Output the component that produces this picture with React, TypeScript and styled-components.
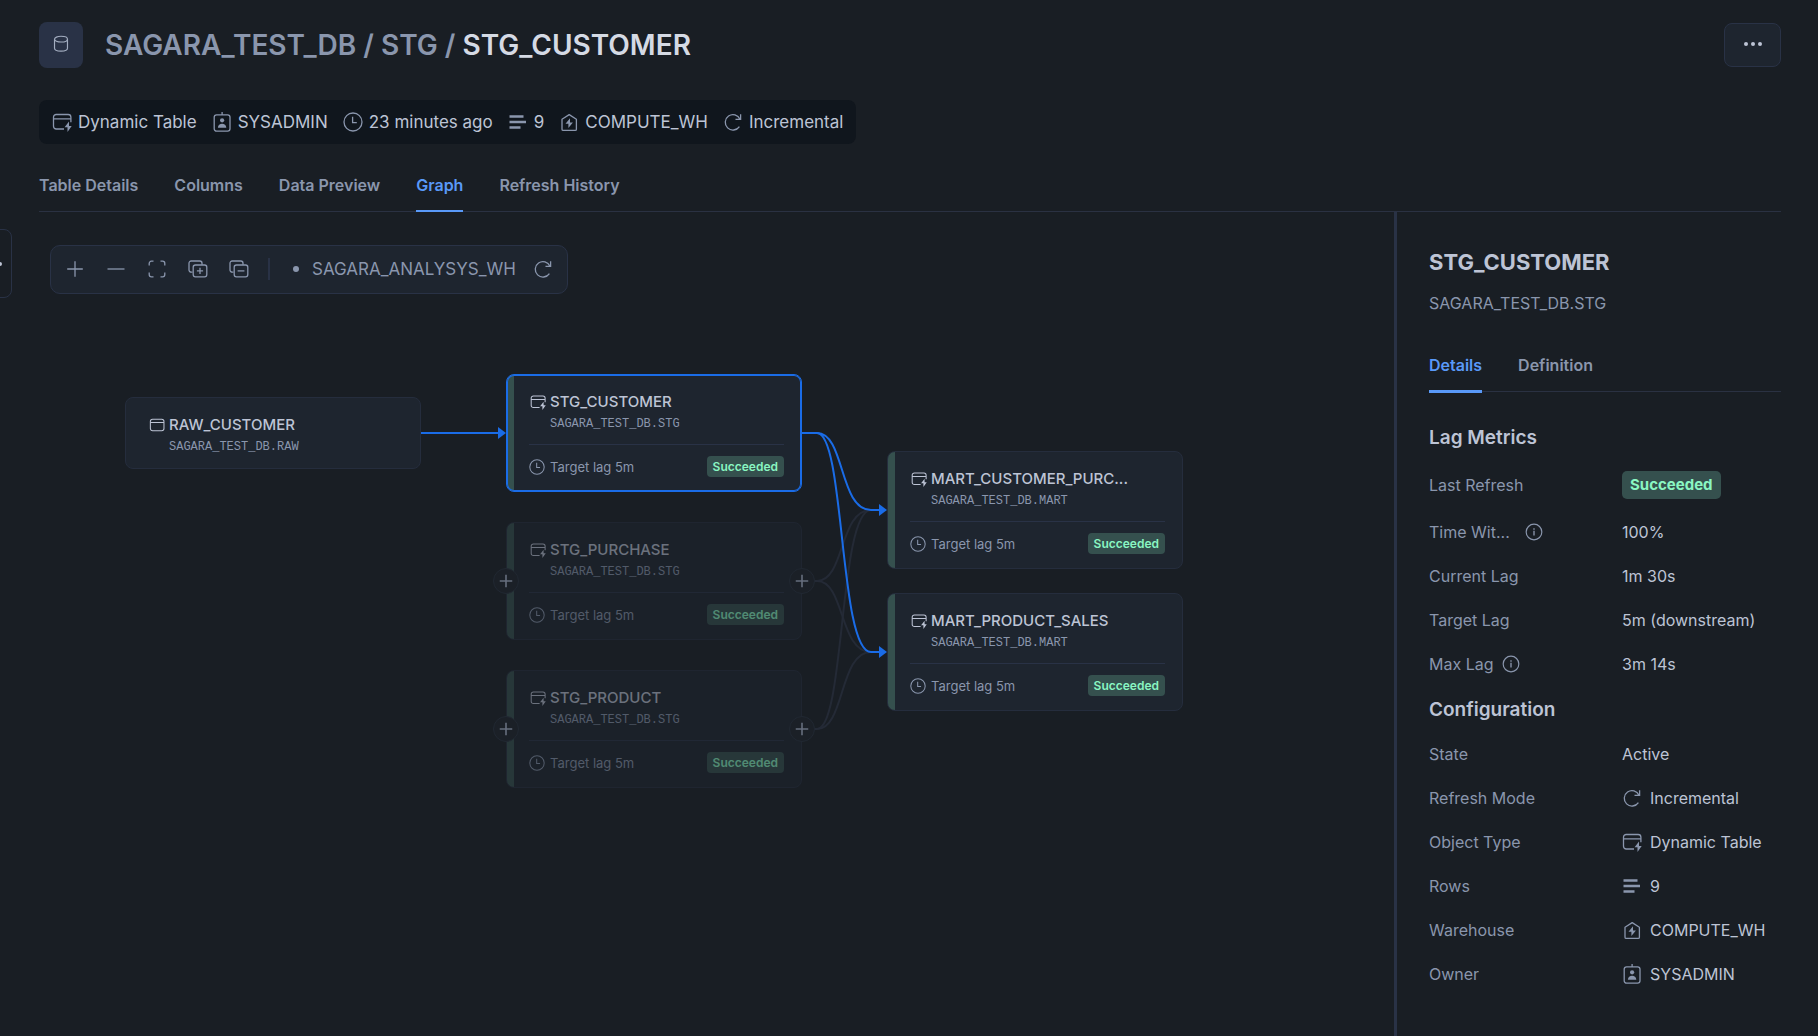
import React from "react";
import styled, { createGlobalStyle, css } from "styled-components";

const color = {
  bg: "#191e24",
  surface: "#1e252f",
  sunken: "#10161d",
  border: "#293246",
  line: "#2a3142",
  text: "#bdc4d5",
  strong: "#d5dae4",
  muted: "#8a96ad",
  accent: "#5999f8",
  edge: "#1a6ce7",
  green: "#35504e",
  greenText: "#8af6c2",
};

const GlobalStyle = createGlobalStyle`
  * { box-sizing: border-box; }
  body {
    margin: 0;
    background: ${color.bg};
    color: ${color.text};
    font-family: Inter, "Liberation Sans", sans-serif;
    font-size: 16px;
    line-height: 22px;
  }
  button { font: inherit; color: inherit; background: none; border: 0; padding: 0; cursor: pointer; }
  h1, h2, h3, p, dl, dd, ul { margin: 0; padding: 0; }
`;

/* ---------- icons ---------- */

const Svg = styled.svg<{ $size?: number }>`
  display: block;
  flex: none;
  width: ${(p) => p.$size ?? 20}px;
  height: ${(p) => p.$size ?? 20}px;
  fill: none;
  stroke: currentColor;
  stroke-width: 1.3;
`;

type IconProps = { size?: number };

const DatabaseIcon = ({ size }: IconProps) => (
  <Svg $size={size} viewBox="0 0 20 20">
    <ellipse cx="10" cy="4.6" rx="7.2" ry="3.2" />
    <path d="M2.800 4.600v10.200c0 1.800 3.200 3.200 7.200 3.200s7.200-1.400 7.200-3.200V4.600" />
  </Svg>
);
const TableIcon = ({ size }: IconProps) => (
  <Svg $size={size} viewBox="0 0 20 20">
    <rect x="1.7" y="2.7" width="17" height="14.6" rx="2.8" />
    <path d="M1.7 6.800h17" />
  </Svg>
);
const DynamicTableIcon = ({ size }: IconProps) => (
  <Svg $size={size} viewBox="0 0 20 20">
    <path d="M12 17H4.2a2.7 2.7 0 0 1-2.7-2.7V5.2a2.7 2.7 0 0 1 2.7-2.7h12a2.7 2.7 0 0 1 2.7 2.7v5M1.5 6.8h17.4" />
    <path d="M17 9.600 12.600 15.200h2.900v4.700l4.200-5.800H17z" fill="currentColor" stroke="none" />
  </Svg>
);
const OwnerIcon = ({ size }: IconProps) => (
  <Svg $size={size} viewBox="0 0 20 20">
    <rect x="2.2" y="2.800" width="15.8" height="16.400" rx="2.4" />
    <path d="M10.1 0v3" />
    <circle cx="10.1" cy="8.3" r="2.100" fill="currentColor" stroke="none" />
    <path d="M5.900 15.800c0-5.400 8.400-5.400 8.400 0z" fill="currentColor" stroke="none" />
  </Svg>
);
const ClockIcon = ({ size }: IconProps) => (
  <Svg $size={size} viewBox="0 0 20 20">
    <circle cx="10" cy="10" r="9" />
    <path d="M9.600 4.800V10.600h4.200" />
  </Svg>
);
const RowsIcon = ({ size }: IconProps) => (
  <Svg $size={size} viewBox="0 0 20 20">
    <path d="M1.500 4.500h14M1.500 10h16.500M1.500 15.500h11" strokeWidth="2.600" />
  </Svg>
);
const WarehouseIcon = ({ size }: IconProps) => (
  <Svg $size={size} viewBox="0 0 20 20">
    <path d="M3 7.200 10.200 2.600l7.200 4.600v10a1.200 1.200 0 0 1-1.200 1.200h-12A1.200 1.200 0 0 1 3 17.200z" strokeLinejoin="round" />
    <path d="M11 6.200 6.500 11.800h2.900v4.200l4.500-5.600H11z" fill="currentColor" stroke="none" />
  </Svg>
);
const RefreshIcon = ({ size }: IconProps) => (
  <Svg $size={size} viewBox="0 0 20 20">
    <path d="M16.400 14.600A7.700 7.700 0 1 1 17 7.200M17.600 2.200v5.100h-5.100" />
  </Svg>
);
const InfoIcon = ({ size }: IconProps) => (
  <Svg $size={size} viewBox="0 0 20 20">
    <circle cx="10" cy="10" r="8.700" />
    <path d="M10 8.600v5.200M10 5.900v1.500" strokeWidth="1.500" />
  </Svg>
);
const PlusIcon = ({ size }: IconProps) => (
  <Svg $size={size} viewBox="0 0 20 20">
    <path d="M10 2.200v15.600M2.200 10h15.600" />
  </Svg>
);
const MinusIcon = ({ size }: IconProps) => (
  <Svg $size={size} viewBox="0 0 20 20">
    <path d="M1.500 10h17" />
  </Svg>
);
const FitIcon = ({ size }: IconProps) => (
  <Svg $size={size} viewBox="0 0 20 20">
    <path d="M2.200 6.500V4.400a2.200 2.200 0 0 1 2.200-2.200h2.100M13.500 2.200h2.100a2.200 2.200 0 0 1 2.200 2.200v2.100M17.800 13.500v2.100a2.200 2.200 0 0 1-2.200 2.200h-2.100M6.500 17.800H4.400a2.200 2.200 0 0 1-2.200-2.200v-2.100" />
  </Svg>
);
const StackIcon = ({ size, plus }: IconProps & { plus?: boolean }) => (
  <Svg $size={size} viewBox="0 0 20 20">
    <path d="M4.500 13.200H3.200a2.200 2.200 0 0 1-2.200-2.200V4.200A2.200 2.200 0 0 1 3.200 2h8.600A2.200 2.200 0 0 1 14 4.200v1.600" />
    <rect x="5.200" y="6" width="13.600" height="11.800" rx="2.200" />
    <path d={plus ? "M12 8.800v6.200M8.900 11.900h6.200" : "M8.600 11.900h6.800"} />
  </Svg>
);

/* ---------- page header ---------- */

const Page = styled.div`
  position: relative;
  display: flex;
  flex-direction: column;
  min-height: 100vh;
  padding: 22px 37px 0 39px;
  overflow: hidden;
`;

const Header = styled.header`
  display: flex;
  align-items: center;
  gap: 22px;
  height: 46px;
`;

const HeaderIcon = styled.span`
  display: grid;
  place-items: center;
  width: 44px;
  height: 46px;
  padding-bottom: 2px;
  border-radius: 8px;
  background: ${color.border};
  color: #a3adc0;
`;

const Title = styled.h1`
  flex: 1;
  font-size: 28px;
  line-height: 36px;
  font-weight: 600;
  color: ${color.muted};
  strong { font-weight: 600; color: ${color.strong}; }
`;

const MoreButton = styled.button`
  display: flex;
  align-items: center;
  justify-content: center;
  gap: 3px;
  width: 57px;
  height: 44px;
  padding-bottom: 2px;
  border: 1px solid ${color.border};
  border-radius: 8px;
  background: ${color.surface};
`;

const Dot = styled.i<{ $size: number }>`
  width: ${(p) => p.$size}px;
  height: ${(p) => p.$size}px;
  border-radius: 50%;
  background: currentColor;
`;

const MetaBar = styled.ul`
  display: flex;
  align-self: flex-start;
  align-items: center;
  gap: 15px;
  height: 44px;
  margin-top: 32px;
  padding: 0 13px;
  border-radius: 8px;
  background: ${color.sunken};
  list-style: none;
  font-size: 17px;
`;

const IconText = styled.span<{ $gap?: number }>`
  display: flex;
  align-items: center;
  gap: ${(p) => p.$gap ?? 6}px;
  white-space: nowrap;
  svg { color: ${color.muted}; }
`;

const Tabs = styled.div`
  display: flex;
  gap: 36px;
  height: 54px;
  border-bottom: 1px solid ${color.line};
`;

const Tab = styled.button<{ $active?: boolean; $bar: number }>`
  position: relative;
  font-size: 16px;
  font-weight: 600;
  color: ${(p) => (p.$active ? color.accent : color.muted)};
  ${(p) =>
    p.$active &&
    css`
      &::after {
        content: "";
        position: absolute;
        left: 0;
        right: 0;
        bottom: ${1 - p.$bar}px;
        height: ${p.$bar}px;
        background: ${color.accent};
      }
    `}
`;

const PageTabs = styled(Tabs)`
  margin-top: 14px;
`;

const DrawerHandle = styled.button`
  position: absolute;
  left: -8px;
  top: 229px;
  display: flex;
  align-items: center;
  justify-content: flex-start;
  padding-left: 5px;
  width: 20px;
  height: 69px;
  border: 1px solid ${color.border};
  border-radius: 8px;
`;

/* ---------- graph ---------- */

const Body = styled.main`
  display: flex;
  flex: 1;
`;

const Canvas = styled.section`
  position: relative;
  flex: 1;
  min-width: 0;
  padding: 33px 11px;
`;

const Toolbar = styled.div`
  display: inline-flex;
  align-items: center;
  height: 49px;
  padding: 0 3px 2px;
  border: 1px solid ${color.border};
  border-radius: 10px;
  background: ${color.surface};
  color: ${color.muted};
`;

const ToolButton = styled.button`
  display: grid;
  place-items: center;
  width: 41px;
  height: 40px;
`;

const ToolDivider = styled.span`
  width: 2px;
  height: 22px;
  margin: 0 23px 0 9px;
  background: ${color.border};
`;

const WarehouseButton = styled.button`
  display: flex;
  align-items: center;
  gap: 13px;
  margin-right: 7px;
  font-size: 17px;
`;

const Edges = styled.svg`
  position: absolute;
  left: 0;
  top: 0;
  width: 1200px;
  height: 700px;
  fill: none;
  pointer-events: none;
`;

const Node = styled.article<{ $x: number; $y: number; $selected?: boolean; $dim?: boolean; $plain?: boolean }>`
  position: absolute;
  left: ${(p) => p.$x}px;
  top: ${(p) => p.$y}px;
  width: 296px;
  height: ${(p) => (p.$plain ? 72 : 118)}px;
  padding: 16px 17px 0 22px;
  border: 1px solid #252d3d;
  border-radius: 8px;
  background: ${(p) =>
    p.$plain ? color.surface : `linear-gradient(90deg, ${color.green} 7px, ${color.surface} 7px)`};
  overflow: hidden;
  opacity: ${(p) => (p.$dim ? 0.5 : 1)};
  ${(p) => p.$selected && css`border-color: ${color.edge}; box-shadow: inset 0 0 0 1px ${color.edge};`}
`;

const NodeTitle = styled.h3`
  display: flex;
  align-items: center;
  gap: 4px;
  padding-left: 1px;
  font-size: 15px;
  line-height: 22px;
  font-weight: 500;
  white-space: nowrap;
`;

const NodePath = styled.p`
  padding-left: 21px;
  font-family: "Liberation Mono", monospace;
  font-size: 12px;
  line-height: 22px;
  color: ${color.muted};
`;

const NodeFooter = styled.div`
  display: flex;
  align-items: center;
  justify-content: space-between;
  height: 44px;
  margin-top: 9px;
  border-top: 1px solid ${color.border};
  font-size: 13px;
  color: ${color.muted};
`;

const Badge = styled.span<{ $large?: boolean }>`
  display: inline-block;
  padding: 0 ${(p) => (p.$large ? 8 : 6)}px;
  border-radius: ${(p) => (p.$large ? 5 : 4)}px;
  background: ${color.green};
  color: ${color.greenText};
  font-size: ${(p) => (p.$large ? 15 : 12)}px;
  line-height: ${(p) => (p.$large ? 28 : 21)}px;
  font-weight: ${(p) => (p.$large ? 700 : 600)};
`;

const ExpandButton = styled.button<{ $x: number; $y: number }>`
  position: absolute;
  left: ${(p) => p.$x - 13}px;
  top: ${(p) => p.$y - 13}px;
  display: grid;
  place-items: center;
  width: 26px;
  height: 26px;
  border: 1px solid #212832;
  border-radius: 50%;
  background: #1b2027;
  color: #666e7e;
  svg { stroke-width: 2; }
`;

type GraphNode = { name: string; path: string; x: number; y: number; kind?: "table"; selected?: boolean; dim?: boolean };

const nodes: GraphNode[] = [
  { name: "RAW_CUSTOMER", path: "SAGARA_TEST_DB.RAW", x: 86, y: 185, kind: "table" },
  { name: "STG_CUSTOMER", path: "SAGARA_TEST_DB.STG", x: 467, y: 162, selected: true },
  { name: "STG_PURCHASE", path: "SAGARA_TEST_DB.STG", x: 467, y: 310, dim: true },
  { name: "STG_PRODUCT", path: "SAGARA_TEST_DB.STG", x: 467, y: 458, dim: true },
  { name: "MART_CUSTOMER_PURC...", path: "SAGARA_TEST_DB.MART", x: 848, y: 239 },
  { name: "MART_PRODUCT_SALES", path: "SAGARA_TEST_DB.MART", x: 848, y: 381 },
];

const expanders = [
  [467, 369],
  [763, 369],
  [467, 517],
  [763, 517],
];

const curve = (y1: number, y2: number) =>
  `M763 ${y1}H778C806 ${y1} 800 ${y2} 832 ${y2}H842`;

const arrow = (x: number, y: number) => `M${x - 8} ${y - 6}L${x} ${y}L${x - 8} ${y + 6}Z`;

const GraphCard = ({ node }: { node: GraphNode }) => {
  const plain = node.kind === "table";
  return (
    <Node $x={node.x} $y={node.y} $selected={node.selected} $dim={node.dim} $plain={plain}>
      <NodeTitle>
        {plain ? <TableIcon size={16} /> : <DynamicTableIcon size={16} />}
        {node.name}
      </NodeTitle>
      <NodePath>{node.path}</NodePath>
      {!plain && (
        <NodeFooter>
          <IconText $gap={5}>
            <ClockIcon size={16} />
            Target lag 5m
          </IconText>
          <Badge>Succeeded</Badge>
        </NodeFooter>
      )}
    </Node>
  );
};

/* ---------- details panel ---------- */

const Panel = styled.aside`
  flex: none;
  width: 387px;
  padding: 37px 0 0 32px;
  border-left: 3px solid ${color.border};
`;

const PanelTitle = styled.h2`
  font-size: 22px;
  line-height: 26px;
  font-weight: 700;
`;

const PanelPath = styled.p`
  margin: 17px 0 24px;
  font-size: 16px;
  color: ${color.muted};
`;

const PanelTabs = styled(Tabs)`
  margin-bottom: 22px;
`;

const Section = styled.h3`
  padding-top: 2px;
  font-size: 19px;
  line-height: 44px;
  font-weight: 600;
`;

const Details = styled.dl`
  display: grid;
  grid-template-columns: 193px 1fr;
`;

const Term = styled.dt`
  display: flex;
  align-items: center;
  gap: 8px;
  min-height: 44px;
  color: ${color.muted};
`;

const TermText = styled.span<{ $width?: number }>`
  width: ${(p) => (p.$width ? `${p.$width}px` : "auto")};
  overflow: hidden;
  text-overflow: ellipsis;
  white-space: nowrap;
`;

const Value = styled.dd<{ $tall?: boolean }>`
  display: flex;
  align-items: center;
  min-height: ${(p) => (p.$tall ? 50 : 44)}px;
  white-space: nowrap;
`;

type Detail = { label: string; value: React.ReactNode; info?: boolean; width?: number; tall?: boolean };

const metrics: Detail[] = [
  { label: "Last Refresh", value: <Badge $large>Succeeded</Badge>, tall: true },
  { label: "Time Wit...", value: "100%", info: true, width: 88 },
  { label: "Current Lag", value: "1m 30s" },
  { label: "Target Lag", value: "5m (downstream)" },
  { label: "Max Lag", value: "3m 14s", info: true },
];

const configuration: Detail[] = [
  { label: "State", value: "Active" },
  { label: "Refresh Mode", value: <IconText $gap={8}><RefreshIcon />Incremental</IconText> },
  { label: "Object Type", value: <IconText $gap={8}><DynamicTableIcon />Dynamic Table</IconText> },
  { label: "Rows", value: <IconText $gap={8}><RowsIcon />9</IconText> },
  { label: "Warehouse", value: <IconText $gap={8}><WarehouseIcon />COMPUTE_WH</IconText> },
  { label: "Owner", value: <IconText $gap={8}><OwnerIcon />SYSADMIN</IconText> },
];

const DetailList = ({ items }: { items: Detail[] }) => (
  <Details>
    {items.map((item) => (
      <React.Fragment key={item.label}>
        <Term>
          <TermText $width={item.width}>{item.label}</TermText>
          {item.info && <InfoIcon size={18} />}
        </Term>
        <Value $tall={item.tall}>{item.value}</Value>
      </React.Fragment>
    ))}
  </Details>
);

export default function App() {
  return (
    <Page>
      <GlobalStyle />
      <DrawerHandle aria-label="Open sidebar">
        <Dot $size={4} />
      </DrawerHandle>
      <Header>
        <HeaderIcon>
          <DatabaseIcon size={18} />
        </HeaderIcon>
        <Title>
          SAGARA_TEST_DB / STG / <strong>STG_CUSTOMER</strong>
        </Title>
        <MoreButton aria-label="More actions">
          <Dot $size={4} />
          <Dot $size={4} />
          <Dot $size={4} />
        </MoreButton>
      </Header>
      <MetaBar>
        <li><IconText><DynamicTableIcon />Dynamic Table</IconText></li>
        <li><IconText><OwnerIcon />SYSADMIN</IconText></li>
        <li><IconText><ClockIcon />23 minutes ago</IconText></li>
        <li><IconText><RowsIcon />9</IconText></li>
        <li><IconText><WarehouseIcon />COMPUTE_WH</IconText></li>
        <li><IconText><RefreshIcon />Incremental</IconText></li>
      </MetaBar>
      <PageTabs role="tablist">
        {["Table Details", "Columns", "Data Preview", "Graph", "Refresh History"].map((name) => (
          <Tab key={name} role="tab" aria-selected={name === "Graph"} $active={name === "Graph"} $bar={2}>
            {name}
          </Tab>
        ))}
      </PageTabs>
      <Body>
        <Canvas>
          <Toolbar>
            <ToolButton aria-label="Zoom in"><PlusIcon /></ToolButton>
            <ToolButton aria-label="Zoom out"><MinusIcon /></ToolButton>
            <ToolButton aria-label="Fit to screen"><FitIcon /></ToolButton>
            <ToolButton aria-label="Expand all"><StackIcon plus /></ToolButton>
            <ToolButton aria-label="Collapse all"><StackIcon /></ToolButton>
            <ToolDivider />
            <WarehouseButton>
              <Dot $size={6} />
              SAGARA_ANALYSYS_WH
            </WarehouseButton>
            <ToolButton aria-label="Refresh"><RefreshIcon /></ToolButton>
          </Toolbar>
          <Edges viewBox="0 0 1200 700">
            <g stroke="#242a36" strokeWidth="2">
              <path d={curve(369, 298)} />
              <path d={curve(369, 440)} />
              <path d={curve(517, 298)} />
              <path d={curve(517, 440)} />
            </g>
            <g stroke={color.edge} strokeWidth="2">
              <path d="M382 221H460" />
              <path d={curve(221, 298)} />
              <path d={curve(221, 440)} />
            </g>
            <g fill={color.edge}>
              <path d={arrow(467, 221)} />
              <path d={arrow(848, 298)} />
              <path d={arrow(848, 440)} />
            </g>
          </Edges>
          {nodes.map((node) => (
            <GraphCard key={node.name} node={node} />
          ))}
          {expanders.map(([x, y]) => (
            <ExpandButton key={`${x}-${y}`} $x={x} $y={y} aria-label="Show connected tables">
              <PlusIcon size={16} />
            </ExpandButton>
          ))}
        </Canvas>
        <Panel>
          <PanelTitle>STG_CUSTOMER</PanelTitle>
          <PanelPath>SAGARA_TEST_DB.STG</PanelPath>
          <PanelTabs role="tablist">
            <Tab role="tab" aria-selected $active $bar={3}>Details</Tab>
            <Tab role="tab" aria-selected={false} $bar={3}>Definition</Tab>
          </PanelTabs>
          <Section>Lag Metrics</Section>
          <DetailList items={metrics} />
          <Section>Configuration</Section>
          <DetailList items={configuration} />
        </Panel>
      </Body>
    </Page>
  );
}
